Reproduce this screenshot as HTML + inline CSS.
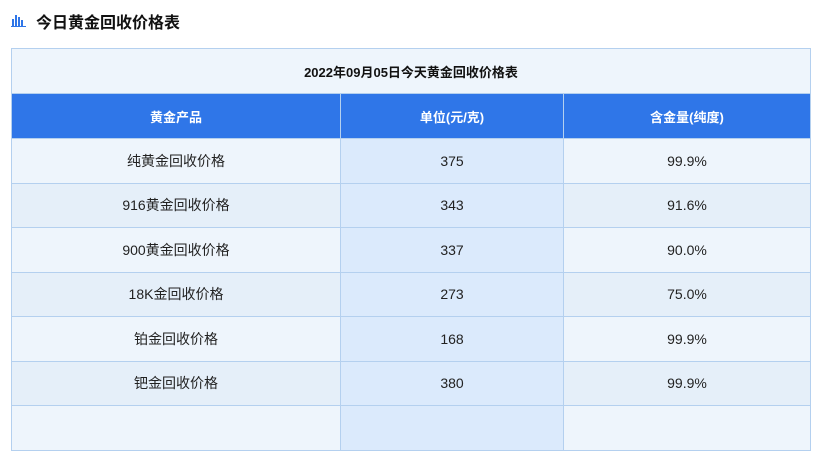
<!DOCTYPE html>
<html><head><meta charset="utf-8"><style>
body{margin:0;background:#fff;font-family:"Liberation Sans","Noto Sans CJK SC",sans-serif;width:828px;height:411px;overflow:hidden;position:relative}
.h{position:absolute;left:36px;top:9px;font-size:16px;font-weight:bold;color:#111}
.ic{position:absolute;left:11px;top:13px}
table{position:absolute;left:11px;top:48px;width:800px;border-collapse:collapse;font-size:14px;color:#222;text-align:center}
td,th{border:1px solid #b4d0ef;padding:0}
.t td{height:44px;background:#eef5fc;font-weight:bold;color:#111;font-size:13px}
th{height:44px;background:#2f76e8;color:#fff;font-weight:bold;border-color:#b4d0ef;font-size:13px}
tr.r td{height:43.5px;background:#e5eff9}
tr.r:nth-child(odd) td{background:#eef5fc}
tr.r td:nth-child(2){background:#dbeafc}
</style></head><body>
<svg class="ic" width="15" height="14" viewBox="0 0 15 14"><g fill="#2f76e8"><rect x="1" y="6" width="2" height="7"/><rect x="4" y="2" width="2" height="11"/><rect x="7" y="4" width="2" height="9"/><rect x="10" y="7" width="2" height="6"/><rect x="0" y="13" width="15" height="1"/></g></svg>
<div class="h">今日黄金回收价格表</div>
<table>
<tr class="t"><td colspan="3">2022年09月05日今天黄金回收价格表</td></tr>
<tr><th style="width:328px">黄金产品</th><th style="width:222px">单位(元/克)</th><th>含金量(纯度)</th></tr>
<tr class="r"><td>纯黄金回收价格</td><td>375</td><td>99.9%</td></tr>
<tr class="r"><td>916黄金回收价格</td><td>343</td><td>91.6%</td></tr>
<tr class="r"><td>900黄金回收价格</td><td>337</td><td>90.0%</td></tr>
<tr class="r"><td>18K金回收价格</td><td>273</td><td>75.0%</td></tr>
<tr class="r"><td>铂金回收价格</td><td>168</td><td>99.9%</td></tr>
<tr class="r"><td>钯金回收价格</td><td>380</td><td>99.9%</td></tr>
<tr class="r"><td>&nbsp;</td><td></td><td></td></tr>
</table>
</body></html>
